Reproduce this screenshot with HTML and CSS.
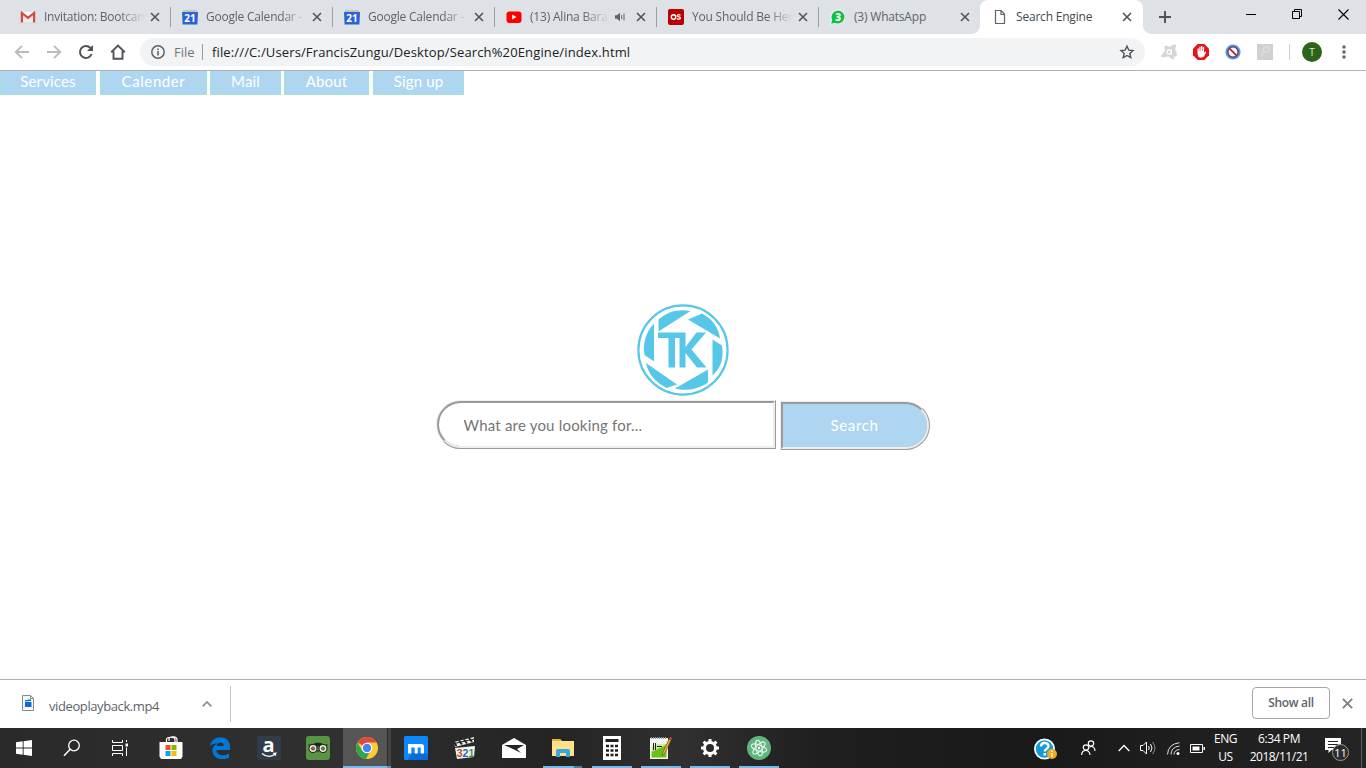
FILE: index.html
```html
<!DOCTYPE html>
<html lang="en">
<head>
<meta charset="utf-8">
<title>Search Engine</title>
<link rel="stylesheet" href="styles.css">
</head>
<body>
<div class="screen">
  <header class="tabstrip">
    <div class="tab">
      <svg class="fav" viewBox="0 0 16 16"><path d="M2 3h12v10H2z" fill="#eceaea"/><path d="M3 3l5 4.5L13 3" fill="#fff"/><path d="M1.900 13.500V4L8 8.800 14.100 4v9.500" fill="none" stroke="#d5493c" stroke-width="2.200"/></svg>
      <span class="title t1">Invitation: Bootcam</span><svg class="close" viewBox="0 0 10 10"><path d="M1 1l8 8M9 1l-8 8"/></svg>
    </div>
    <div class="tab">
      <svg class="fav" viewBox="0 0 16 16"><path d="M1 1h14v3H1z" fill="#c4c4c4"/><path d="M0 3h16l-.6 12.500H.6z" fill="#2a62d8"/><text x="8" y="13" class="cal">21</text></svg>
      <span class="title t2">Google Calendar -</span><svg class="close" viewBox="0 0 10 10"><path d="M1 1l8 8M9 1l-8 8"/></svg>
    </div>
    <div class="tab">
      <svg class="fav" viewBox="0 0 16 16"><path d="M1 1h14v3H1z" fill="#c4c4c4"/><path d="M0 3h16l-.6 12.500H.6z" fill="#2a62d8"/><text x="8" y="13" class="cal">21</text></svg>
      <span class="title t2">Google Calendar -</span><svg class="close" viewBox="0 0 10 10"><path d="M1 1l8 8M9 1l-8 8"/></svg>
    </div>
    <div class="tab">
      <svg class="fav" viewBox="0 0 16 16"><rect x=".5" y="2.500" width="15" height="11.500" rx="3" fill="#f00"/><path d="M6.200 5.600v5l4.300-2.500z" fill="#fff"/></svg>
      <span class="title t3">(13) Alina Bara</span>
      <svg class="sound" viewBox="0 0 10 10"><path d="M0 3.300h2L5 .8v8.400L2 6.700H0z" fill="#5f6368"/><path d="M6.700 3v4M9 1.500v7" stroke="#5f6368" fill="none"/></svg>
      <svg class="close" viewBox="0 0 10 10"><path d="M1 1l8 8M9 1l-8 8"/></svg>
    </div>
    <div class="tab">
      <svg class="fav" viewBox="0 0 16 16"><rect width="16" height="16" rx="2" fill="#ba0000"/><circle cx="5.500" cy="8" r="2.200" fill="none" stroke="#fff" stroke-width="1.400"/><path d="M12.500 6.200C11 5.300 9 5.700 9.300 7c.3 1.200 3.200.8 3.200 2.100 0 1.300-2.300 1.500-3.600.3" fill="none" stroke="#fff" stroke-width="1.300"/></svg>
      <span class="title t4">You Should Be Her</span><svg class="close" viewBox="0 0 10 10"><path d="M1 1l8 8M9 1l-8 8"/></svg>
    </div>
    <div class="tab last">
      <svg class="fav" viewBox="0 0 16 16"><path d="M0 16l1-5A7.500 7.500 0 1 1 5 14.800z" fill="#eef5f0"/><path d="M1.200 14.700l1-3.900A6.400 6.400 0 1 1 5 13.700z" fill="#0fc143"/><text x="8.300" y="12" class="wa">3</text></svg>
      <span class="title t5">(3) WhatsApp</span><svg class="close" viewBox="0 0 10 10"><path d="M1 1l8 8M9 1l-8 8"/></svg>
    </div>
    <div class="tab active">
      <svg class="fav" viewBox="0 0 16 16"><path d="M3.500 1.500h5.500l3.500 3.500v9.500h-9zM9 2v3.500h3.500" fill="#fff" stroke="#5f6368" stroke-width="1.200"/></svg>
      <span class="title t6">Search Engine</span><svg class="close" viewBox="0 0 10 10"><path d="M1 1l8 8M9 1l-8 8"/></svg>
    </div>
    <svg class="plus" viewBox="0 0 12 12"><path d="M6 0v12M0 6h12" stroke="#50545a" stroke-width="2"/></svg>
    <svg class="winctl" viewBox="0 0 104 12"><path d="M0 6.500h10" stroke="#000"/><path d="M46.500 3.500h7v7h-7zM48.500 3.500v-2h7v7h-2" fill="none" stroke="#000"/><path d="M92.500 1.500l10 10M102.500 1.500l-10 10" stroke="#000" stroke-width="1.100"/></svg>
  </header>

  <div class="toolbar">
    <svg class="navicon" viewBox="0 0 16 16"><path d="M15 8H2M8 1.800L1.800 8 8 14.200" stroke="#b9bbbe"/></svg>
    <svg class="navicon" viewBox="0 0 16 16"><path d="M1 8h13M8 1.800L14.200 8 8 14.200" stroke="#b9bbbe"/></svg>
    <svg class="navicon" viewBox="0 0 16 16"><path d="M13.600 10A6 6 0 1 1 12.300 3.800L14 5.500" stroke="#50545a" stroke-width="2"/><path d="M15 1v6H9z" fill="#50545a" stroke="none"/></svg>
    <svg class="navicon" viewBox="0 0 16 16"><path d="M1.200 8.300L8 1.600l6.800 6.700M3.500 7v7.700h9V7" stroke="#50545a" stroke-width="1.900"/></svg>
    <div class="omnibox">
      <svg class="info" viewBox="0 0 14 14"><circle cx="7" cy="7" r="6.200" fill="none" stroke="#5f6368" stroke-width="1.500"/><path d="M7 6v4.500M7 3.500V5" stroke="#5f6368" stroke-width="1.600"/></svg>
      <span class="file">File</span><span class="sep"></span>
      <span class="url">file:///C:/Users/FrancisZungu/Desktop/Search%20Engine/index.html</span>
      <svg class="star" viewBox="0 0 16 16"><path d="M8 2.200l1.800 3.900 4.200.4-3.200 2.900 1 4.300L8 11.500l-3.800 2.200 1-4.300L2 6.500l4.200-.4z" fill="none" stroke="#50545a" stroke-width="1.400"/></svg>
    </div>
    <div class="extensions">
      <svg class="ext" viewBox="0 0 16 16"><path d="M4 2c2-1 3 .5 4.500.7C10.500 2.500 12 0 14.500.6c1.500.4.7 2-.2 3.900-.5 1.500 1.700 3.500 1.700 6.500-.5 2-2 1-3 2-1 1.500 1.500 3-.5 2.500-2 0-3-2-5-3C5.500 12 1 14.500 0 12.500.5 10 4 8 4 6 4 4.500 2.500 3 4 2z" fill="#d6d6d6"/><circle cx="8" cy="8" r="2.100" fill="none" stroke="#fff" stroke-width="1.200"/><path d="M10.500 5.500v5" stroke="#fff"/></svg>
      <svg class="ext" viewBox="0 0 16 16"><path d="M4.700 0h6.600L16 4.700v6.600L11.300 16H4.700L0 11.300V4.700z" fill="#e5141c"/><path d="M4.500 9V4.500h1.300V7h.5V2.800h1.300V7H8V2h1.300v5h.5V3h1.300v6l1-1.500 1.200.5-2.300 4.500c-.8 1.500-5.500 1.800-6-.5z" fill="#fff"/></svg>
      <svg class="ext" viewBox="0 0 16 16"><circle cx="8" cy="8" r="7.600" fill="#4a9be8"/><circle cx="8" cy="8" r="5.100" fill="#f7f3f3" stroke="#8b2940" stroke-width="1.300"/><path d="M4.500 4.500l7 7" stroke="#8b2940" stroke-width="1.700"/></svg>
      <svg class="ext" viewBox="0 0 16 16"><path d="M0 0h16v16H0z" fill="#d0d0d0"/><path d="M4.500 13.500L7 3h3.500c3 0 2 5-1.500 5H6.500" fill="none" stroke="#dadada" stroke-width="1.800"/></svg>
    </div>
    <span class="tbsep"></span>
    <span class="avatar">T</span>
    <svg class="dots" viewBox="0 0 4 14"><g fill="#5f6368"><circle cx="2" cy="2" r="1.700"/><circle cx="2" cy="7" r="1.700"/><circle cx="2" cy="12" r="1.700"/></g></svg>
  </div>

  <main class="page">
    <nav class="menu">
      <a class="m1">Services</a><a class="m2">Calender</a><a class="m3">Mail</a><a class="m4">About</a><a class="m5">Sign up</a>
    </nav>
    <svg class="logo" viewBox="0 0 92 92">
      <circle cx="46" cy="46" r="44.600" fill="none" stroke="#56c7e8" stroke-width="2.200"/>
      <g fill="#56c7e8">
        <path d="M21.500 27.500V15.500C30 7.500 42 4.500 53.500 7z"/>
        <path d="M51 15.500L65 9.500C75 15 81.500 23 83 34.500z"/>
        <path d="M75.500 35.500L85 41.500C87 54 84 64 75.500 71.500z"/>
        <path d="M71 65.500v13C61 85.500 48 87.500 38 84.500z"/>
        <path d="M40 80.500L30 84C19 79 11 70 9 59z"/>
        <path d="M17 57.500L7.500 51C5.500 39 9 28 17 19.500z"/>
        <path d="M21 28.500h27.500V43l11-14.500H69L54.500 45.500 69.500 63.500H60L48.500 49v14.500h-6V34H38v29.500h-6.500V34H21z"/>
      </g>
    </svg>
    <form class="search" onsubmit="return false">
      <input class="query" type="text" placeholder="What are you looking for...">
      <button class="go">Search</button>
    </form>
  </main>

  <div class="shelf">
    <svg class="dl" viewBox="0 0 12 16"><path d="M.5.500h8l3 3v12H.5z" fill="#f7f7f7" stroke="#8a8a8a"/><path d="M8.500.500v3h3" fill="none" stroke="#8a8a8a"/><path d="M3 7h6.500v5H3zM3 5.300l6-1v1.600l-6 .7z" fill="#0a6fd0"/></svg>
    <span class="dlname">videoplayback.mp4</span>
    <svg class="chev" viewBox="0 0 10 6"><path d="M.7 5.300L5 1l4.300 4.300" fill="none" stroke="#8b8b8b" stroke-width="1.700"/></svg>
    <span class="dlsep"></span>
    <span class="showall">Show all</span>
    <svg class="shelfclose" viewBox="0 0 10 10"><path d="M.8.800l8.400 8.400M9.200.800L.8 9.200" stroke="#858585" stroke-width="1.900"/></svg>
  </div>

  <footer class="taskbar">
    <div class="cell n"><svg width="16" height="16" viewBox="0 0 16 16"><path d="M0 2.300L6.700 1.300V7.600H0zM7.600 1.200L16 0v7.600H7.600zM0 8.500h6.700v6.300L0 13.800zM7.600 8.500H16V16l-8.400-1.200z" fill="#fff"/></svg></div>
    <div class="cell n"><svg width="18" height="18" viewBox="0 0 18 18"><circle cx="11" cy="6.500" r="5.300" fill="none" stroke="#fff" stroke-width="1.300"/><path d="M7.200 10.300L1 16.700" stroke="#fff" stroke-width="1.500"/></svg></div>
    <div class="cell n"><svg width="18" height="16" viewBox="0 0 18 16"><path d="M1.500 0v2.500h10V0M1.500 16v-2.500h10V16M1.500 5.500h10v5h-10z" fill="none" stroke="#fff"/><path d="M15.500 0v2M15.500 7.500V16" stroke="#fff"/><path d="M14.500 3.500h2.500v3h-2.500z" fill="#fff"/></svg></div>
    <div class="cell first"><svg width="24" height="24" viewBox="0 0 24 24"><path d="M7.500 7V3.500C7.500.500 16 .5 16 3.500V7M10 5V2.500C11 0 18 .5 18 3.500V6" fill="none" stroke="#fff" stroke-width="1.200"/><path d="M.5 6h23v14.500L22 23H2L.5 20.500z" fill="#fff"/><path d="M6.500 9h5v5h-5z" fill="#f25022"/><path d="M12.500 9h5v5h-5z" fill="#7fba00"/><path d="M6.500 15h5v5h-5z" fill="#00a4ef"/><path d="M12.500 15h5v5h-5z" fill="#ffb900"/></svg></div>
    <div class="cell"><svg width="22" height="22" viewBox="0 0 22 22"><path d="M1 9C3-3 21-2.500 21 9.500V13H7.500c0 6 8 6.500 12.500 3.500v4.200C13.500 24 3.500 22 3.500 13.500 3.500 9.500 6 7.500 8.500 6.500 6 6.500 2.500 7 1 9zM7.600 9h7.200C14.600 4 8 4.500 7.600 9z" fill="#0078d7"/></svg></div>
    <div class="cell"><svg width="24" height="24" viewBox="0 0 24 24"><rect width="24" height="24" rx="1.500" fill="#323c49"/><text x="11.500" y="15.500" class="ama">a</text><path d="M5 17.500c4 3.500 9 3.500 13 .8M16 17.300l3-.2-1 2.700" fill="none" stroke="#fff" stroke-width="1.200"/></svg></div>
    <div class="cell"><svg width="24" height="24" viewBox="0 0 24 24"><rect width="24" height="24" rx="3" fill="#589442"/><path d="M2 8.500h4c4-2.500 8-2.500 12 0h4l-1.500 2h-17z" fill="#222"/><circle cx="7" cy="12.500" r="4" fill="#f3f0df" stroke="#222" stroke-width="1.100"/><circle cx="17" cy="12.500" r="4" fill="#f3f0df" stroke="#222" stroke-width="1.100"/><circle cx="7" cy="12.500" r="1.600" fill="#d55" stroke="#333" stroke-width=".8"/><circle cx="17" cy="12.500" r="1.600" fill="#5b9a45" stroke="#333" stroke-width=".8"/><path d="M10.700 14.500h2.600L12 16.500z" fill="#222"/></svg></div>
    <div class="cell chrome run"><svg width="22" height="22" viewBox="0 0 22 22"><circle cx="11" cy="11" r="11" fill="#fdcb36"/><path d="M11 11L1.500 5.500A11 11 0 0 1 20.500 5.500H11z" fill="#df4a3e"/><path d="M1.500 5.500A11 11 0 0 0 10 22l4-7.500L6.200 13.700z" fill="#30a254"/><circle cx="11" cy="11" r="5.300" fill="#fff"/><circle cx="11" cy="11" r="4.200" fill="#4285f4"/></svg></div>
    <div class="cell"><svg width="24" height="24" viewBox="0 0 24 24"><rect width="24" height="24" rx="1.500" fill="#0b87ff"/><path d="M4 24l4-7h14l2 2v5z" fill="#086bdc"/><path d="M4 8h13.500q2.500 0 2.500 3v6.500h-3.300v-6h-3v6h-3v-6H7.300v6H4z" fill="#fff"/></svg></div>
    <div class="cell"><svg width="22" height="22" viewBox="0 0 22 22"><path d="M0 5L20 0v5L1 10z" fill="#eee"/><path d="M0 5l2.500 4M5 3.500l3 4M10 2.500l3 4M15 1l3 4" stroke="#222" stroke-width="2"/><path d="M.5 6.500L20 2" stroke="#222"/><path d="M1 11l20-2-1 11-17 2z" fill="#f4f4f4"/><text x="2.700" y="20" class="mpc"><tspan fill="#bf4e22">3</tspan><tspan fill="#2666b0">2</tspan><tspan fill="#439635">1</tspan></text></svg></div>
    <div class="cell"><svg width="24" height="20" viewBox="0 0 24 20"><path d="M0 7L12 0l12 7v13H0z" fill="#fff"/><path d="M2 7h20l-7 4 4 4-8-4z" fill="#242424"/></svg></div>
    <div class="cell run folder"><svg width="22" height="20" viewBox="0 0 22 20"><path d="M0 1h8l2 2h12v15H0z" fill="#ffe28a"/><path d="M0 1h8l1.500 2H0z" fill="#eab12d"/><path d="M4 19v-6q0-2 2-2h10q2 0 2 2v6h-4v-4H8v4z" fill="#35a9e0"/></svg></div>
    <div class="cell run"><svg width="18" height="24" viewBox="0 0 18 24"><path d="M0 0h18v24H0z" fill="#fff"/><path d="M2.500 3h13v3h-13z" fill="#1f1f1f"/><path d="M3 10h12M3 14.500h12M3 19h12" stroke="#1f1f1f" stroke-width="2.500" stroke-dasharray="3 1.500"/></svg></div>
    <div class="cell run"><svg width="24" height="24" viewBox="0 0 24 24"><path d="M1 2h18v21H1z" fill="#f4f4ee"/><path d="M2.500 15Q10 10 17.500 8v13.500h-15z" fill="#6cc116"/><path d="M2.500 11Q8 6 17.500 9L2.500 16z" fill="#cfe79a"/><path d="M2 2h16" stroke="#999" stroke-width="2" stroke-dasharray="1 1"/><path d="M4.500 7v7M6.500 7v7M8 10.500h5" stroke="#222"/><path d="M20 3l2 1-6 13-3 3 1-4z" fill="#ecae2d" stroke="#7b552b" stroke-width=".7"/><path d="M20 3l1-2 2 1-1 2z" fill="#d44"/></svg></div>
    <div class="cell run"><svg width="20" height="20" viewBox="0 0 20 20"><circle cx="10" cy="10" r="5.500" fill="none" stroke="#fff" stroke-width="3"/><path d="M10 1v3M10 16v3M1 10h3M16 10h3M3.600 3.600l2 2M14.400 14.400l2 2M3.600 16.400l2-2M14.400 5.600l2-2" stroke="#fff" stroke-width="3"/></svg></div>
    <div class="cell run"><svg width="24" height="24" viewBox="0 0 24 24"><circle cx="12" cy="12" r="12" fill="#5fb57d"/><g fill="none" stroke="#e9f7ed" stroke-width="1"><ellipse cx="12" cy="12" rx="8" ry="3" transform="rotate(20 12 12)"/><ellipse cx="12" cy="12" rx="8" ry="3" transform="rotate(78 12 12)"/><ellipse cx="12" cy="12" rx="8" ry="3" transform="rotate(135 12 12)"/></g><circle cx="12" cy="12" r="1.200" fill="#fff"/></svg></div>

    <div class="tray">
      <svg class="help" viewBox="0 0 24 22"><circle cx="10.500" cy="11" r="10.500" fill="#fff"/><circle cx="10.500" cy="11" r="8.700" fill="#149ad7"/><path d="M7 8.500c0-4.500 7.500-4.500 7.500-.5 0 3-3.700 2.500-3.700 5.500M10.800 15v2.500" fill="none" stroke="#fff" stroke-width="2.400"/><circle cx="18" cy="16" r="5" fill="#f6a81c"/><path d="M18 15v4M18 12.500V14" stroke="#fff" stroke-width="1.500"/></svg>
      <svg class="people" viewBox="0 0 15 16"><g fill="none" stroke="#fff" stroke-width="1.200"><circle cx="5" cy="7.500" r="2.700"/><path d="M.7 15c0-6 8.300-6 8.300 0"/><circle cx="10" cy="3.500" r="2.700"/><path d="M8.500 7c3-1.500 5.500.5 5.500 4"/></g></svg>
      <svg class="up" viewBox="0 0 12 8"><path d="M.7 7L6 1.500 11.300 7" fill="none" stroke="#fff" stroke-width="1.300"/></svg>
      <svg class="vol" viewBox="0 0 16 14"><g fill="none" stroke="#fff"><path d="M.5 4.500H3l3.500-3.500v12L3 9.500H.5z"/><path d="M8.500 5q1.500 2 0 4M10.500 3q3 4 0 8"/><path d="M12.500 1q5 6 0 12" stroke="#888"/></g></svg>
      <svg class="wifi" viewBox="0 0 13 13"><g fill="none" stroke="#ddd"><path d="M.5 12.500Q1 2 12.500.700M4 12.500Q4 5 12.500 4M7 12.500Q7 8 12.500 7.500"/></g><circle cx="11" cy="11.500" r="1.500" fill="#fff"/></svg>
      <svg class="bat" viewBox="0 0 15 9"><path d="M.5.500h12v8H.5z" fill="none" stroke="#fff"/><path d="M2.500 2.500h7v4h-7z" fill="#fff"/><path d="M13.500 3h1.500v3h-1.500z" fill="#fff"/></svg>
      <div class="lang"><span>ENG</span><span>US</span></div>
      <div class="clock"><span class="time">6:34 PM</span><span class="date">2018/11/21</span></div>
      <svg class="notif" viewBox="0 0 25 24"><path d="M0 1h16v12H6.500L3.500 16v-3H0z" fill="#fff"/><path d="M3 4.500h10M3 7.500h10M3 10.500h6" stroke="#222"/><circle cx="15.500" cy="15.500" r="8" fill="#2c2c2c" stroke="#999" stroke-width="1"/><text x="15.500" y="19.500" class="cnt">11</text></svg>
      <span class="peek"></span>
    </div>
  </footer>
</div>
</body>
</html>
```
FILE: styles.css
```css
* { box-sizing: border-box; }
body { margin: 0; font-family: "Open Sans", "Noto Sans", sans-serif; background: #fff; overflow: hidden; }
svg { display: block; flex: none; }
.screen { width: 1366px; height: 768px; display: flex; flex-direction: column; }

.tabstrip { height: 34px; background: #dee1e6; display: flex; align-items: center; flex: none; }
.tab { width: 162px; height: 34px; padding-left: 11px; display: flex; align-items: center; flex: none; background: linear-gradient(#9a9da2, #9a9da2) right 0 top 7px / 1px 20px no-repeat; }
.tab:first-child { width: 171px; padding-left: 20px; }
.tab.last { width: 161px; background: none; }
.tab.active { width: 163px; padding-left: 12px; background: #fff; border-radius: 8px 8px 0 0; position: relative; }
.tab.active::before, .tab.active::after { content: ""; position: absolute; bottom: 0; width: 8px; height: 8px; }
.tab.active::before { left: -8px; background: radial-gradient(circle at 0 0, transparent 7.5px, #fff 8px); }
.tab.active::after { right: -8px; background: radial-gradient(circle at 100% 0, transparent 7.5px, #fff 8px); }
.fav { width: 16px; height: 16px; margin-right: 8px; }
.title { width: 102px; height: 18px; font-size: 12px; line-height: 18px; color: #5f6368; white-space: nowrap; letter-spacing: -.2px; -webkit-mask-image: linear-gradient(90deg, #000 75px, transparent 101px); }
.t1 { letter-spacing: -.25px; }
.t2 { letter-spacing: -.22px; }
.t3 { width: 78px; -webkit-mask-image: linear-gradient(90deg, #000 52px, transparent 80px); }
.t5, .t6 { -webkit-mask-image: none; }
.t6 { color: #45494d; }
.sound { width: 10px; height: 10px; margin: 0 9px 0 7px; }
.close { width: 10px; height: 10px; margin-left: 4px; fill: none; stroke: #505459; stroke-width: 1.6; }
.t3 ~ .close { margin-left: 2px; }
.plus { width: 12px; height: 12px; margin-left: 16px; }
.winctl { width: 104px; height: 12px; margin: -6px 0 0 75px; }
.cal { font: 700 10px "Open Sans"; fill: #fff; text-anchor: middle; }
.wa { font: 800 10px "Open Sans"; fill: #fff; text-anchor: middle; }

.toolbar { height: 37px; background: #fff; border-bottom: 1px solid #b0b0b2; display: flex; align-items: center; flex: none; padding-left: 14px; }
.navicon { width: 16px; height: 16px; margin-right: 16px; fill: none; stroke-width: 1.9; }
.navicon:nth-child(4) { margin-right: 14px; }
.omnibox { width: 1005px; height: 28px; border-radius: 14px; background: #f1f3f4; display: flex; align-items: center; padding: 0 10px 0 11px; }
.info { width: 14px; height: 14px; }
.file { width: 21px; margin-left: 9px; font-size: 13px; color: #70757a; }
.sep { width: 1px; height: 16px; background: #96999d; margin: 0 9px 0 7px; }
.url { font-size: 13px; color: #202124; letter-spacing: .135px; flex: 1; white-space: nowrap; }
.star { width: 16px; height: 16px; }
.extensions { display: flex; gap: 16px; margin-left: 16px; }
.ext { width: 16px; height: 16px; }
.tbsep { width: 1px; height: 16px; margin: 0 12px 0 16px; background: #cfcfcf; }
.avatar { width: 20px; height: 20px; border-radius: 50%; background: #2c641b; color: #d5e8ce; font-size: 10px; line-height: 20px; text-align: center; }
.dots { width: 4px; height: 14px; margin-left: 20px; }

.page { height: 608px; flex: none; display: flex; flex-direction: column; align-items: center; font-family: Lato, sans-serif; }
.menu { align-self: flex-start; display: flex; height: 24px; flex: none; }
.menu a { height: 24px; border: 1px solid #a3e4d0; border-top: 0; background: #aed6f1; color: #fff; font-size: 15px; line-height: 20px; text-align: center; white-space: nowrap; letter-spacing: .15px; }
.menu .m2 { letter-spacing: .6px; }
.m1 { width: 96px; margin-right: 4px; }
.m2 { width: 107px; margin-right: 3px; }
.m3 { width: 71px; margin-right: 3px; }
.m4 { width: 85px; margin-right: 4px; }
.m5 { width: 91px; }
.logo { width: 92px; height: 92px; margin-top: 209px; }
.search { display: flex; align-items: flex-start; margin: 4px 0 0; gap: 4px; transform: translateX(-.5px); }
.search { transform: none; margin-right: 1px; }
.query { width: 340px; height: 49px; border: 3px ridge #eee; border-radius: 25px 0 0 25px; padding: 0 0 0 25px; background: #fff; font: 15px Lato, sans-serif; letter-spacing: .2px; outline: 0; }
.query::placeholder { color: #757575; opacity: 1; }
.go { width: 150px; height: 49px; margin-top: 1px; border: 3px ridge #eee; border-radius: 0 25px 25px 0; background: #aed6f1; color: #fff; font: 15px Lato, sans-serif; letter-spacing: .6px; padding: 0 0 1px; }

.shelf { height: 49px; flex: none; border-top: 1px solid #b0b0b2; display: flex; align-items: center; padding: 0 13px 0 22px; background: #fff; }
.dl { width: 12px; height: 16px; margin-top: -2px; }
.dlname { width: 152px; margin: 3px 0 0 15px; font-size: 13px; letter-spacing: -.4px; color: #5f6368; }
.chev { width: 10px; height: 6px; margin-left: 1px; }
.dlsep { width: 1px; height: 36px; background: #c6c6c6; margin-left: 18px; }
.showall { margin-left: auto; width: 78px; height: 32px; border: 1px solid #a3a5a8; border-radius: 4px; font-size: 12px; font-weight: 600; line-height: 29px; text-align: center; color: #5f6368; letter-spacing: -.3px; margin-top: -2px; }
.shelfclose { width: 11px; height: 11px; margin-left: 12px; margin-top: -2px; }

.taskbar { height: 40px; flex: none; display: flex; background: linear-gradient(90deg, #2a2a2a, #303030 25%, #242424 40%, #303030 50%, #1f1f1f 60%, #191919 75%, #242424); }
.cell { width: 48px; height: 40px; margin-right: 1px; display: flex; align-items: center; justify-content: center; flex: none; }
.cell.n { margin-right: 0; }
.cell.first { margin-left: 3px; }
.run { background: linear-gradient(#76b9ed, #76b9ed) center bottom / 40px 2px no-repeat; }
.run.chrome { background: linear-gradient(#76b9ed, #76b9ed) left bottom / 44px 2px no-repeat, linear-gradient(#5a94c4, #5a94c4) right bottom / 4px 2px no-repeat, linear-gradient(90deg, #555 44px, #2b2b2b 44px, #2b2b2b 45px, #444 45px); }
.run.folder { background: linear-gradient(#76b9ed, #76b9ed) 4px bottom / 31px 2px no-repeat, linear-gradient(#4c7ca4, #4c7ca4) 35px bottom / 8px 2px no-repeat; }
.ama { font: 700 20px "Open Sans"; fill: #fff; text-anchor: middle; }
.mpc { font: 800 10.5px "Liberation Sans"; }
.tray { margin-left: auto; display: flex; align-items: center; color: #fff; }
.help { width: 24px; height: 22px; margin-right: 23px; margin-top: 2px; }
.people { width: 15px; height: 16px; margin-right: 22px; margin-top: -1px; }
.up { width: 12px; height: 8px; margin-right: 10px; }
.vol { width: 16px; height: 14px; margin-right: 11px; }
.wifi { width: 13px; height: 13px; margin-right: 10px; margin-top: 1px; }
.bat { width: 15px; height: 9px; margin-right: 9px; }
.lang, .clock { display: flex; flex-direction: column; align-items: center; font-size: 12px; line-height: 18px; letter-spacing: -.4px; }
.lang { width: 23px; margin-right: 13px; }
.clock { width: 58px; margin-right: 17px; white-space: nowrap; }
.date { letter-spacing: -.5px; }
.notif { width: 25px; height: 24px; margin-right: 11px; margin-top: 1px; }
.peek { width: 5px; height: 40px; border-left: 1px solid #5c5c5c; }
.cnt { font: 11px "Open Sans"; fill: #fff; text-anchor: middle; }
```
